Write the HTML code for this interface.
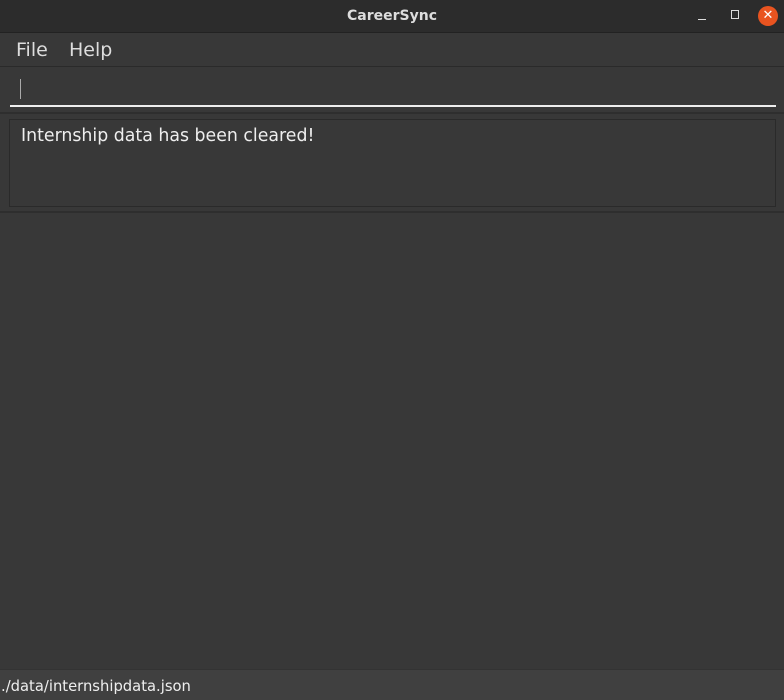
<!DOCTYPE html>
<html><head><style>
body{margin:0;width:784px;height:700px;background:#383838;font-family:"DejaVu Sans","Liberation Sans",sans-serif;position:relative;overflow:hidden;color:#eee}
div{position:absolute;box-sizing:border-box}
</style></head><body>
<div style="left:0;top:0;width:784px;height:33px;background:#2c2c2c;border-bottom:1px solid #222"></div>
<div style="left:0;top:8px;width:784px;text-align:center;font-size:14px;font-weight:bold;color:#ddd">CareerSync</div>
<div style="left:698px;top:19px;width:8px;height:1px;background:#ddd"></div>
<div style="left:731px;top:10px;width:8px;height:9px;border:1px solid #ddd"></div>
<div style="left:758px;top:6px;width:20px;height:20px;border-radius:50%;background:#e95420;color:#fff;font-size:13px;text-align:center;line-height:20px">✕</div>
<div style="left:0;top:34px;width:784px;height:33px;background:#383838;border-bottom:1px solid #2a2a2a"></div>
<div style="left:16px;top:39px;font-size:19px;color:#ddd">File</div>
<div style="left:69px;top:39px;font-size:19px;color:#ddd">Help</div>
<div style="left:20px;top:79px;width:1px;height:20px;background:#aaa"></div>
<div style="left:10px;top:105px;width:766px;height:2px;background:#eee"></div>
<div style="left:0;top:112px;width:784px;height:2px;background:#2e2e2e"></div>
<div style="left:9px;top:119px;width:767px;height:88px;border:1px solid #2a2a2a;background:#383838"></div>
<div style="left:21px;top:126px;font-size:17.35px;color:#eee">Internship data has been cleared!</div>
<div style="left:0;top:211px;width:784px;height:2px;background:#2e2e2e"></div>
<div style="left:0;top:669px;width:784px;height:31px;background:#404040;border-top:1px solid #333"></div>
<div style="left:1px;top:678px;font-size:14.75px;color:#eee">./data/internshipdata.json</div>
</body></html>
